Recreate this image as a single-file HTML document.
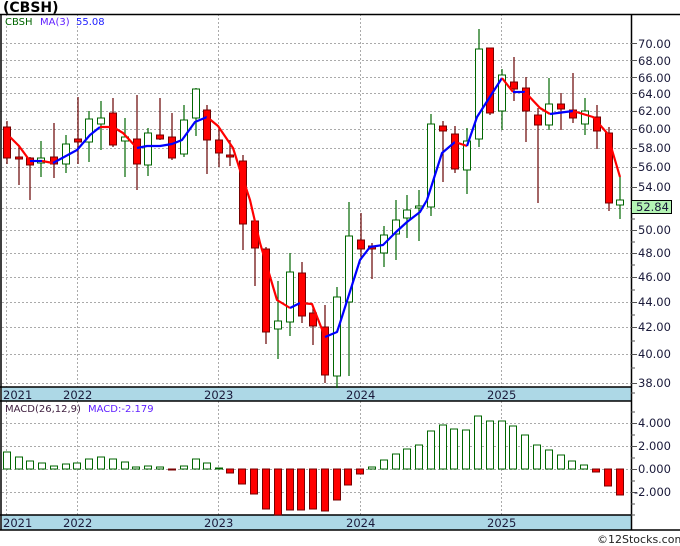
<!DOCTYPE html>
<html><head><meta charset="utf-8"><style>
html,body{margin:0;padding:0;background:#fff;}
svg{display:block;font-family:"DejaVu Sans","Liberation Sans",sans-serif;}
</style></head><body>
<svg width="680" height="546" viewBox="0 0 680 546" xmlns="http://www.w3.org/2000/svg">
<rect width="680" height="546" fill="#fff"/>
<text x="3" y="12" font-size="14" font-weight="bold" fill="#000">(CBSH)</text>
<rect x="2" y="387" width="629" height="14" fill="#add8e6"/>
<rect x="2" y="515" width="629" height="15" fill="#add8e6"/>
<g stroke="#aaa" stroke-width="1" stroke-dasharray="2,2">
<line x1="2" x2="631" y1="43.5" y2="43.5"/><line x1="2" x2="631" y1="60.5" y2="60.5"/><line x1="2" x2="631" y1="77.5" y2="77.5"/><line x1="2" x2="631" y1="93.5" y2="93.5"/><line x1="2" x2="631" y1="111.5" y2="111.5"/><line x1="2" x2="631" y1="129.5" y2="129.5"/><line x1="2" x2="631" y1="148.5" y2="148.5"/><line x1="2" x2="631" y1="167.5" y2="167.5"/><line x1="2" x2="631" y1="187.5" y2="187.5"/><line x1="2" x2="631" y1="208.5" y2="208.5"/><line x1="2" x2="631" y1="230.5" y2="230.5"/><line x1="2" x2="631" y1="253.5" y2="253.5"/><line x1="2" x2="631" y1="277.5" y2="277.5"/><line x1="2" x2="631" y1="302.5" y2="302.5"/><line x1="2" x2="631" y1="327.5" y2="327.5"/><line x1="2" x2="631" y1="354.5" y2="354.5"/><line x1="2" x2="631" y1="383.5" y2="383.5"/>
<line x1="2" x2="631" y1="423.5" y2="423.5"/><line x1="2" x2="631" y1="446.5" y2="446.5"/><line x1="2" x2="631" y1="469.5" y2="469.5"/><line x1="2" x2="631" y1="492.5" y2="492.5"/>
<line x1="6.5" x2="6.5" y1="14" y2="387"/><line x1="77.5" x2="77.5" y1="14" y2="387"/><line x1="218.5" x2="218.5" y1="14" y2="387"/><line x1="360.5" x2="360.5" y1="14" y2="387"/><line x1="501.5" x2="501.5" y1="14" y2="387"/>
<line x1="6.5" x2="6.5" y1="401" y2="515"/><line x1="77.5" x2="77.5" y1="401" y2="515"/><line x1="218.5" x2="218.5" y1="401" y2="515"/><line x1="360.5" x2="360.5" y1="401" y2="515"/><line x1="501.5" x2="501.5" y1="401" y2="515"/>
</g>
<g stroke="#000" stroke-width="1.5" fill="none">
<line x1="0" x2="680" y1="14.5" y2="14.5"/>
<line x1="1" x2="1" y1="14" y2="530"/>
<line x1="631.5" x2="631.5" y1="14" y2="530"/>
<line x1="0" x2="631" y1="387" y2="387"/>
<line x1="0" x2="631" y1="401" y2="401"/>
<line x1="0" x2="631" y1="515" y2="515"/>
<line x1="0" x2="680" y1="530" y2="530"/>
</g>
<g stroke="#555" stroke-width="1">
<line x1="631" x2="637" y1="43.5" y2="43.5"/><line x1="631" x2="637" y1="60.5" y2="60.5"/><line x1="631" x2="637" y1="77.5" y2="77.5"/><line x1="631" x2="637" y1="93.5" y2="93.5"/><line x1="631" x2="637" y1="111.5" y2="111.5"/><line x1="631" x2="637" y1="129.5" y2="129.5"/><line x1="631" x2="637" y1="148.5" y2="148.5"/><line x1="631" x2="637" y1="167.5" y2="167.5"/><line x1="631" x2="637" y1="187.5" y2="187.5"/><line x1="631" x2="637" y1="230.5" y2="230.5"/><line x1="631" x2="637" y1="253.5" y2="253.5"/><line x1="631" x2="637" y1="277.5" y2="277.5"/><line x1="631" x2="637" y1="302.5" y2="302.5"/><line x1="631" x2="637" y1="327.5" y2="327.5"/><line x1="631" x2="637" y1="354.5" y2="354.5"/><line x1="631" x2="637" y1="383.5" y2="383.5"/>
<line x1="631" x2="635" y1="219" y2="219"/><line x1="631" x2="635" y1="242" y2="242"/><line x1="631" x2="635" y1="265" y2="265"/><line x1="631" x2="635" y1="290" y2="290"/><line x1="631" x2="635" y1="315" y2="315"/><line x1="631" x2="635" y1="341" y2="341"/><line x1="631" x2="635" y1="368" y2="368"/><line x1="631" x2="635" y1="393" y2="393"/>
<line x1="631" x2="635" y1="412" y2="412"/><line x1="631" x2="637" y1="423.5" y2="423.5"/><line x1="631" x2="635" y1="435" y2="435"/><line x1="631" x2="637" y1="446.5" y2="446.5"/><line x1="631" x2="635" y1="458" y2="458"/><line x1="631" x2="637" y1="469.5" y2="469.5"/><line x1="631" x2="635" y1="481" y2="481"/><line x1="631" x2="637" y1="492.5" y2="492.5"/><line x1="631" x2="635" y1="504" y2="504"/><line x1="631" x2="635" y1="515" y2="515"/>
</g>
<g font-size="11.5" fill="#1a1a3a">
<text x="638" y="48">70.00</text><text x="638" y="65">68.00</text><text x="638" y="82">66.00</text><text x="638" y="98">64.00</text><text x="638" y="115">62.00</text><text x="638" y="133">60.00</text><text x="638" y="152">58.00</text><text x="638" y="171">56.00</text><text x="638" y="191">54.00</text><text x="638" y="234">50.00</text><text x="638" y="257">48.00</text><text x="638" y="281">46.00</text><text x="638" y="306">44.00</text><text x="638" y="331">42.00</text><text x="638" y="358">40.00</text><text x="638" y="387">38.00</text>
<text x="638" y="427">4.000</text><text x="638" y="450">2.000</text><text x="638" y="473">0.000</text><text x="634" y="496">-2.000</text>
</g>
<rect x="631.5" y="200.5" width="40" height="13" fill="#b4f4b4" stroke="#000"/>
<text x="636" y="211" font-size="11.5" fill="#1a1a3a">52.84</text>
<g font-size="11.5" fill="#1a1a3a">
<text x="3" y="399">2021</text><text x="63" y="399">2022</text><text x="204" y="399">2023</text><text x="346" y="399">2024</text><text x="487" y="399">2025</text>
<text x="3" y="527">2021</text><text x="63" y="527">2022</text><text x="204" y="527">2023</text><text x="346" y="527">2024</text><text x="487" y="527">2025</text>
</g>
<g font-size="10">
<text x="5" y="25" fill="#006400">CBSH</text><text x="40" y="25" fill="#6020ff">MA(3)</text><text x="76" y="25" fill="#2020ff">55.08</text>
<text x="5" y="412" fill="#402040">MACD(26,12,9)</text><text x="88" y="412" fill="#6020ff">MACD:-2.179</text>
</g>
<text x="597" y="543" font-size="11" fill="#222">©12Stocks.com</text>
<g stroke-width="1.2">
<g stroke="#600">
<line x1="7" x2="7" y1="121" y2="164"/><line x1="19" x2="19" y1="146" y2="185"/><line x1="30" x2="30" y1="157" y2="200"/><line x1="54" x2="54" y1="123" y2="178"/><line x1="78" x2="78" y1="97" y2="164"/><line x1="113" x2="113" y1="98" y2="147"/><line x1="137" x2="137" y1="95" y2="190"/><line x1="160" x2="160" y1="98" y2="140"/><line x1="172" x2="172" y1="113" y2="160"/><line x1="207" x2="207" y1="105" y2="174"/><line x1="219" x2="219" y1="128" y2="167"/><line x1="230" x2="230" y1="140" y2="166"/><line x1="243" x2="243" y1="155" y2="250"/><line x1="255" x2="255" y1="221" y2="286"/><line x1="266" x2="266" y1="247" y2="344"/><line x1="302" x2="302" y1="262" y2="323"/><line x1="313" x2="313" y1="307" y2="345"/><line x1="325" x2="325" y1="305" y2="383"/><line x1="361" x2="361" y1="213" y2="260"/><line x1="372" x2="372" y1="243" y2="279"/><line x1="443" x2="443" y1="121" y2="182"/><line x1="455" x2="455" y1="126" y2="173"/><line x1="490" x2="490" y1="48" y2="115"/><line x1="514" x2="514" y1="57" y2="101"/><line x1="526" x2="526" y1="77" y2="142"/><line x1="538" x2="538" y1="108" y2="203"/><line x1="561" x2="561" y1="93" y2="130"/><line x1="573" x2="573" y1="73" y2="123"/><line x1="597" x2="597" y1="105" y2="149"/><line x1="609" x2="609" y1="127" y2="211"/>
</g>
<g stroke="#060">
<line x1="41" x2="41" y1="141" y2="177"/><line x1="66" x2="66" y1="135" y2="173"/><line x1="89" x2="89" y1="111" y2="162"/><line x1="101" x2="101" y1="101" y2="150"/><line x1="125" x2="125" y1="118" y2="177"/><line x1="148" x2="148" y1="128" y2="176"/><line x1="184" x2="184" y1="105" y2="157"/><line x1="196" x2="196" y1="88" y2="136"/><line x1="278" x2="278" y1="281" y2="359"/><line x1="290" x2="290" y1="253" y2="336"/><line x1="337" x2="337" y1="287" y2="388"/><line x1="349" x2="349" y1="202" y2="376"/><line x1="384" x2="384" y1="226" y2="267"/><line x1="396" x2="396" y1="200" y2="260"/><line x1="407" x2="407" y1="195" y2="238"/><line x1="419" x2="419" y1="190" y2="241"/><line x1="431" x2="431" y1="114" y2="216"/><line x1="467" x2="467" y1="128" y2="194"/><line x1="479" x2="479" y1="29" y2="147"/><line x1="502" x2="502" y1="69" y2="130"/><line x1="549" x2="549" y1="78" y2="130"/><line x1="585" x2="585" y1="98" y2="135"/><line x1="620" x2="620" y1="177" y2="219"/>
</g>
</g>
<g fill="#f00" stroke="#700" stroke-width="1">
<rect x="3.5" y="127" width="7" height="31"/><rect x="15.5" y="157" width="7" height="2"/><rect x="26.5" y="158" width="7" height="7"/><rect x="50.5" y="157" width="7" height="7"/><rect x="74.5" y="139" width="7" height="3"/><rect x="109.5" y="113" width="7" height="32"/><rect x="133.5" y="139" width="7" height="25"/><rect x="156.5" y="135" width="7" height="4"/><rect x="168.5" y="137" width="7" height="21"/><rect x="203.5" y="110" width="7" height="30"/><rect x="215.5" y="140" width="7" height="13"/><rect x="226.5" y="155" width="7" height="2"/><rect x="239.5" y="161" width="7" height="63"/><rect x="251.5" y="221" width="7" height="27"/><rect x="262.5" y="249" width="7" height="83"/><rect x="298.5" y="273" width="7" height="43"/><rect x="309.5" y="313" width="7" height="13"/><rect x="321.5" y="327" width="7" height="48"/><rect x="357.5" y="240" width="7" height="9"/><rect x="368.5" y="246" width="7" height="3"/><rect x="439.5" y="126" width="7" height="5"/><rect x="451.5" y="134" width="7" height="35"/><rect x="486.5" y="48" width="7" height="65"/><rect x="510.5" y="82" width="7" height="7"/><rect x="522.5" y="88" width="7" height="23"/><rect x="534.5" y="115" width="7" height="10"/><rect x="557.5" y="104" width="7" height="5"/><rect x="569.5" y="110" width="7" height="8"/><rect x="593.5" y="117" width="7" height="14"/><rect x="605.5" y="133" width="7" height="70"/>
</g>
<g fill="#fff" stroke="#060" stroke-width="1">
<rect x="37.5" y="158" width="7" height="5"/><rect x="62.5" y="144" width="7" height="20"/><rect x="85.5" y="119" width="7" height="23"/><rect x="97.5" y="118" width="7" height="6"/><rect x="121.5" y="137" width="7" height="4"/><rect x="144.5" y="133" width="7" height="32"/><rect x="180.5" y="120" width="7" height="34"/><rect x="192.5" y="89" width="7" height="29"/><rect x="274.5" y="321" width="7" height="8"/><rect x="286.5" y="272" width="7" height="50"/><rect x="333.5" y="297" width="7" height="79"/><rect x="345.5" y="236" width="7" height="66"/><rect x="380.5" y="235" width="7" height="18"/><rect x="392.5" y="220" width="7" height="14"/><rect x="403.5" y="210" width="7" height="8"/><rect x="415.5" y="206" width="7" height="2"/><rect x="427.5" y="124" width="7" height="83"/><rect x="463.5" y="141" width="7" height="29"/><rect x="475.5" y="49" width="7" height="90"/><rect x="498.5" y="75" width="7" height="36"/><rect x="545.5" y="104" width="7" height="21"/><rect x="581.5" y="111" width="7" height="13"/><rect x="616.5" y="200" width="7" height="5"/>
</g>
<g fill="none" stroke-width="2.2" stroke-linejoin="round">
<polyline stroke="#f00" points="10,137 19,146 30,161"/>
<polyline stroke="#00f" points="30,161 42,161"/>
<polyline stroke="#f00" points="42,161 53,163"/>
<polyline stroke="#00f" points="53,163 77,150 90,135 100,127"/>
<polyline stroke="#f00" points="100,127 113,127 123,133 137,148"/>
<polyline stroke="#00f" points="137,148 147,146 160,146 172,144 182,140 195,122 207,117"/>
<polyline stroke="#f00" points="207,117 218,126 233,148 240,170 250,200 253,213 260,243 277,300 290,308"/>
<polyline stroke="#00f" points="290,308 300,303"/>
<polyline stroke="#f00" points="300,303 312,304 325,337"/>
<polyline stroke="#00f" points="325,337 337,332 340,323 360,260 370,247 383,245 396,232 407,222 420,212 427,200 442,153 455,142"/>
<polyline stroke="#f00" points="455,142 467,146"/>
<polyline stroke="#00f" points="467,146 477,117 502,78"/>
<polyline stroke="#f00" points="502,78 513,92"/>
<polyline stroke="#00f" points="513,92 525,92"/>
<polyline stroke="#f00" points="525,92 540,108 550,114"/>
<polyline stroke="#00f" points="550,114 573,111"/>
<polyline stroke="#f00" points="573,111 593,117 607,133 620,177"/>
</g>
<g fill="#fff" stroke="#060" stroke-width="1">
<rect x="3.5" y="452" width="7" height="17"/><rect x="15.5" y="457" width="7" height="12"/><rect x="26.5" y="461" width="7" height="8"/><rect x="38.5" y="463" width="7" height="6"/><rect x="50.5" y="466" width="7" height="3"/><rect x="62.5" y="464" width="7" height="5"/><rect x="73.5" y="463" width="7" height="6"/><rect x="85.5" y="459" width="7" height="10"/><rect x="97.5" y="457" width="7" height="12"/><rect x="109.5" y="459" width="7" height="10"/><rect x="121.5" y="462" width="7" height="7"/><rect x="132.5" y="467" width="7" height="2"/><rect x="144.5" y="466" width="7" height="3"/><rect x="156.5" y="467" width="7" height="2"/><rect x="180.5" y="466" width="7" height="3"/><rect x="192.5" y="459" width="7" height="10"/><rect x="203.5" y="463" width="7" height="6"/><rect x="215.5" y="468" width="7" height="1"/>
<rect x="368.5" y="467" width="7" height="2"/><rect x="380.5" y="460" width="7" height="9"/><rect x="392.5" y="454" width="7" height="15"/><rect x="403.5" y="449" width="7" height="20"/><rect x="415.5" y="445" width="7" height="24"/><rect x="427.5" y="431" width="7" height="38"/><rect x="439.5" y="425" width="7" height="44"/><rect x="450.5" y="429" width="7" height="40"/><rect x="462.5" y="430" width="7" height="39"/><rect x="474.5" y="416" width="7" height="53"/><rect x="486.5" y="421" width="7" height="48"/><rect x="498.5" y="421" width="7" height="48"/><rect x="509.5" y="426" width="7" height="43"/><rect x="521.5" y="435" width="7" height="34"/><rect x="533.5" y="445" width="7" height="24"/><rect x="545.5" y="450" width="7" height="19"/><rect x="557.5" y="455" width="7" height="14"/><rect x="568.5" y="461" width="7" height="8"/><rect x="580.5" y="465" width="7" height="4"/>
</g>
<g fill="#f00" stroke="#700" stroke-width="1">
<rect x="168.5" y="469" width="7" height="1"/>
<rect x="226.5" y="469" width="7" height="4"/><rect x="238.5" y="469" width="7" height="15"/><rect x="250.5" y="469" width="7" height="25"/><rect x="262.5" y="469" width="7" height="40"/><rect x="274.5" y="469" width="7" height="46"/><rect x="286.5" y="469" width="7" height="41"/><rect x="297.5" y="469" width="7" height="41"/><rect x="309.5" y="469" width="7" height="40"/><rect x="321.5" y="469" width="7" height="42"/><rect x="333.5" y="469" width="7" height="31"/><rect x="344.5" y="469" width="7" height="16"/><rect x="356.5" y="469" width="7" height="5"/>
<rect x="592.5" y="469" width="7" height="3"/><rect x="604.5" y="469" width="7" height="17"/><rect x="616.5" y="469" width="7" height="26"/>
</g>
</svg>
</body></html>
